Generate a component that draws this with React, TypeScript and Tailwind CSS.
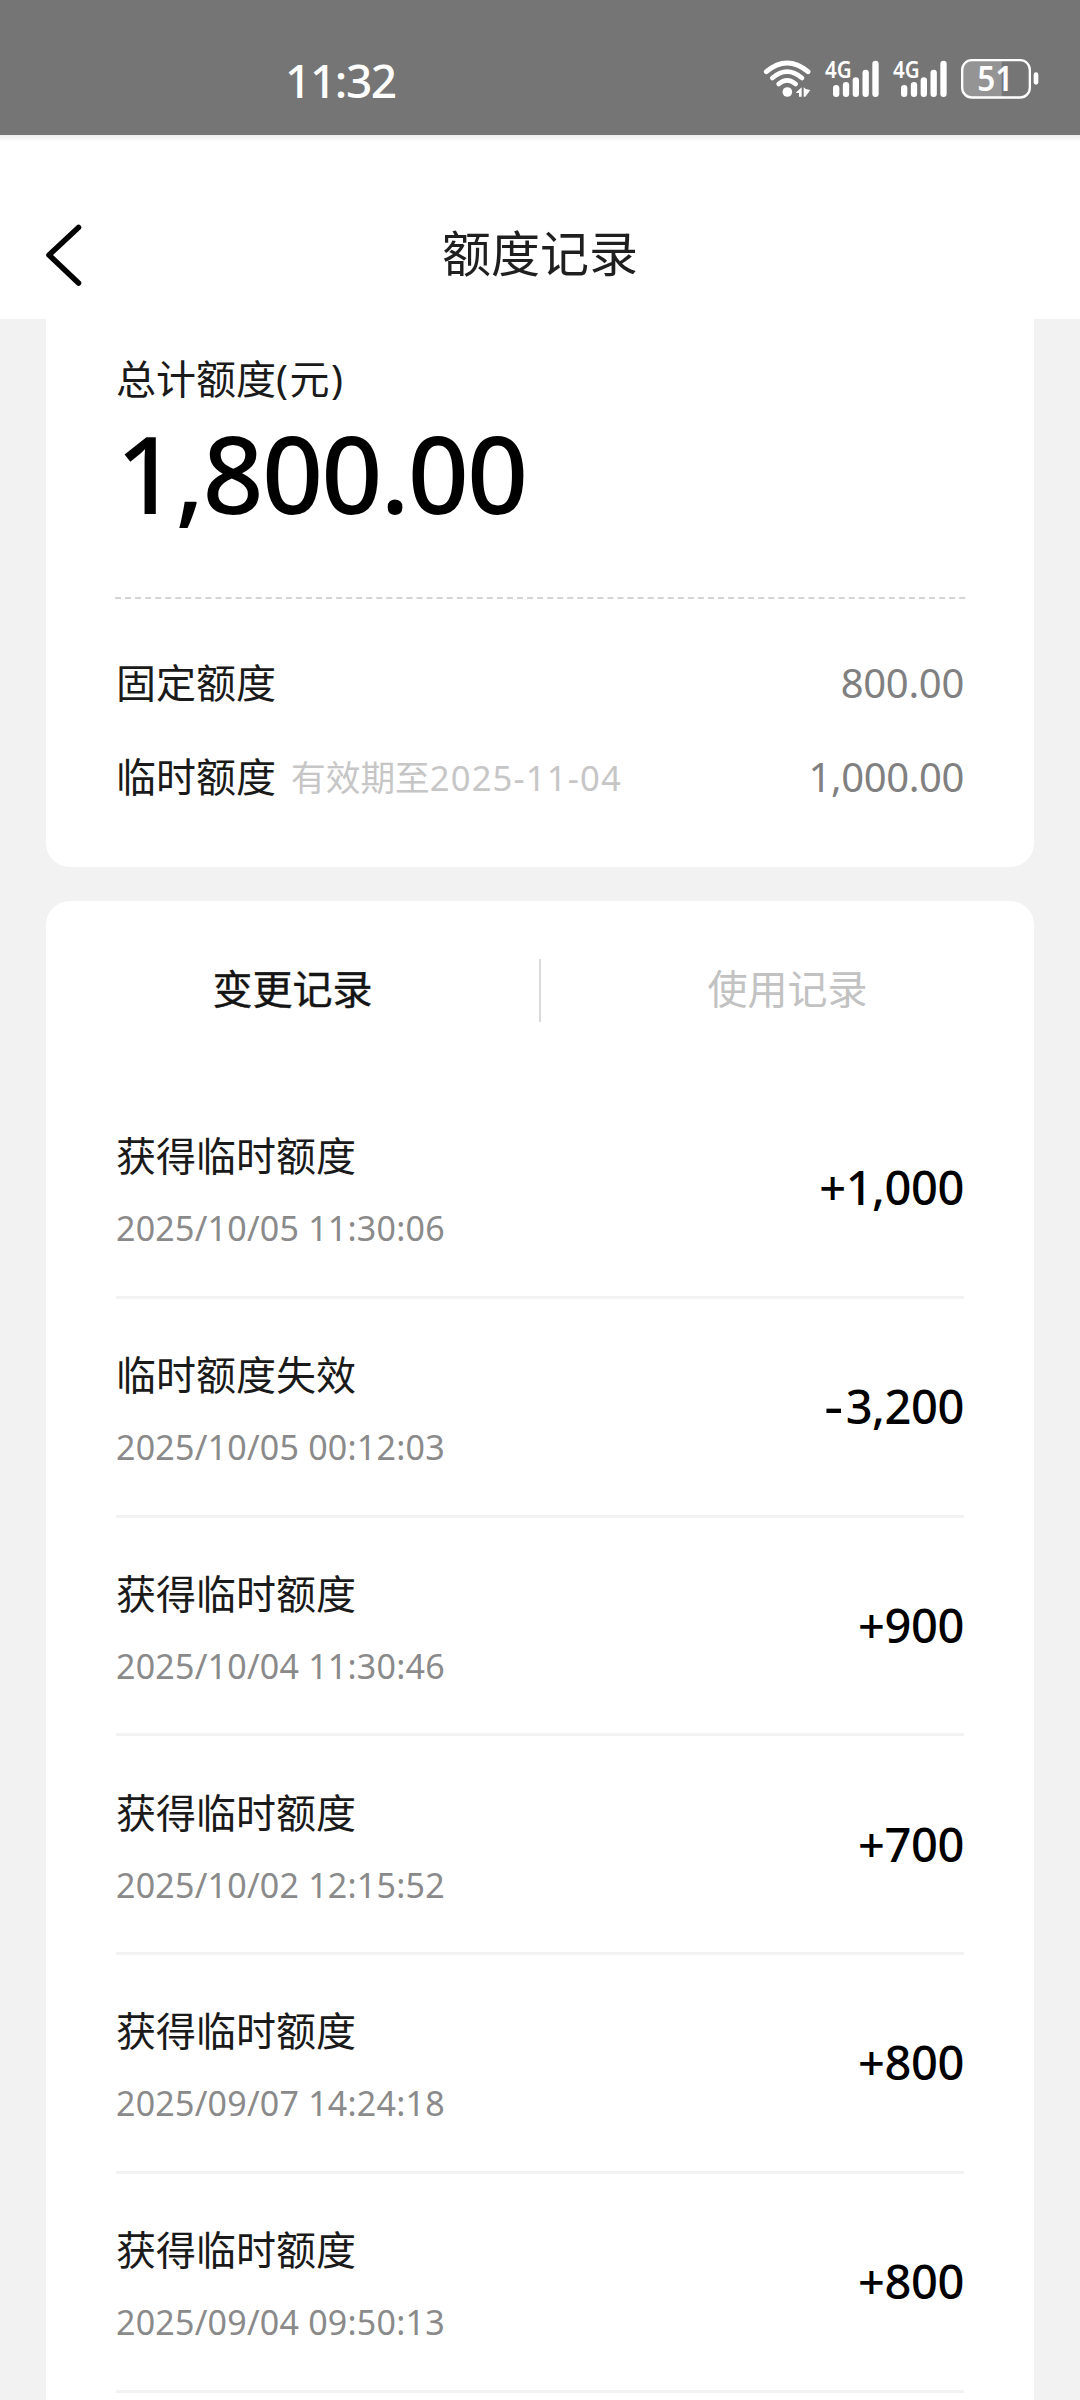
import React, { useState } from 'react';
import { clsx } from 'clsx';

interface QuotaRecord {
    id: number;
    title: string;
    time: string;
    amount: string;
}

const records: QuotaRecord[] = [
    { id: 1, title: '获得临时额度', time: '2025/10/05 11:30:06', amount: '+1,000' },
    { id: 2, title: '临时额度失效', time: '2025/10/05 00:12:03', amount: '-3,200' },
    { id: 3, title: '获得临时额度', time: '2025/10/04 11:30:46', amount: '+900' },
    { id: 4, title: '获得临时额度', time: '2025/10/02 12:15:52', amount: '+700' },
    { id: 5, title: '获得临时额度', time: '2025/09/07 14:24:18', amount: '+800' },
    { id: 6, title: '获得临时额度', time: '2025/09/04 09:50:13', amount: '+800' },
];

const tabs = ['变更记录', '使用记录'];

function WifiIcon() {
    return (
        <svg viewBox="70 55 150 123" className="w-[50px] h-[41px]" fill="none" stroke="#fff" strokeLinecap="round">
            <path d="M80 96 Q142 44 205 96" strokeWidth="15" />
            <path d="M98 115 Q142 77 187 115" strokeWidth="14" />
            <path d="M117 133 Q142 111 168 133" strokeWidth="14" />
            <circle cx="143" cy="157" r="14.5" fill="#fff" stroke="none" />
            {/* Up / down traffic arrows */}
            <path d="M168 159 L186 143 V171 H178 V160 Z" fill="#fff" stroke="none" />
            <path d="M192 143 L198 148 L212 151 L197 171 H192 Z" fill="#fff" stroke="none" />
        </svg>
    );
}

function SignalIcon() {
    const tops = [136, 127, 113, 90, 63];
    return (
        <svg viewBox="252 55 168 123" className="w-[56px] h-[41px] overflow-visible" fill="#fff">
            {tops.map((top, i) => (
                <rect key={top} x={279 + i * 29.5} y={top} width="19" height={172 - top} rx="9.5" />
            ))}
            <text x="255" y="114" fontSize="68" fontWeight="600" textLength="80" lengthAdjust="spacingAndGlyphs">4G</text>
        </svg>
    );
}

function BatteryIcon() {
    return (
        <svg viewBox="660 55 240 126" className="w-[80px] h-[42px] overflow-visible">
            <path d="M785 64 H697 Q669 64 669 91 V145 Q669 172 697 172 H785 Z" fill="#949494" />
            <rect x="666.5" y="61.5" width="203" height="112" rx="29" fill="none" stroke="#fff" strokeWidth="7" />
            <rect x="881" y="98" width="14" height="37" rx="7" fill="#fff" />
            <text x="712" y="153" fontSize="101" fontWeight="600" fill="#fff" textLength="108" lengthAdjust="spacingAndGlyphs">51</text>
        </svg>
    );
}

function StatusBar() {
    return (
        <div className="flex h-[135px] items-start justify-between bg-[#757575] pl-[285px] pr-[40px] pt-[58px] text-white">
            <div className="-mt-[2px] text-[46px] font-medium leading-[48px] tracking-[-1.4px]">11:32</div>
            <div className="flex">
                <WifiIcon />
                <div className="ml-[11px] flex gap-3">
                    <SignalIcon />
                    <SignalIcon />
                </div>
                <div className="ml-[12px]">
                    <BatteryIcon />
                </div>
            </div>
        </div>
    );
}

function NavBar() {
    return (
        <div className="h-[184px] bg-white">
            <div className="h-[7px] bg-gradient-to-b from-[#ededed] to-white" />
            <div className="grid h-[177px] grid-cols-[120px_1fr_120px] pt-[76px]">
                <button className="ml-[44px] h-[72px] w-10" aria-label="返回">
                    <svg viewBox="0 0 40 72" className="h-[72px] w-10" fill="none" stroke="#000" strokeWidth="5.5" strokeLinecap="round" strokeLinejoin="round">
                        <path d="M34.5 9.5 L5 37 L34.5 65" />
                    </svg>
                </button>
                <h1 className="text-center text-[49px] leading-[70px] text-[#1f1f1f]">额度记录</h1>
            </div>
        </div>
    );
}

function SummaryCard() {
    return (
        <section className="h-[548px] rounded-b-3xl bg-white px-[70px] pt-[30px]">
            <div className="text-[40px] leading-[60px]">
                总计额度<span className="tracking-[1.5px]">(元)</span>
            </div>
            <div className="mt-[9px] text-[107px] font-medium leading-[110px] tracking-[-1.9px] text-black">1,800.00</div>
            <svg className="-ml-px mt-[69px] block h-[2px] w-[851px]" aria-hidden="true">
                <line x1="0" y1="1" x2="851" y2="1" stroke="#d4d4d4" strokeWidth="2" strokeDasharray="6 4.05" />
            </svg>
            <div className="mt-[54px] flex items-center justify-between text-[40px] leading-[60px]">
                <span>固定额度</span>
                <span className="tracking-[-0.3px] text-[#808080]">800.00</span>
            </div>
            <div className="mt-[32px] flex items-center justify-between text-[40px] leading-[60px]">
                <div className="flex items-center">
                    <span>临时额度</span>
                    <span className="ml-[15px] mt-[3px] text-[34.7px] text-[#c6c6c6]">
                        有效期至<span className="tracking-[1.1px]">2025-11-04</span>
                    </span>
                </div>
                <span className="tracking-[-0.4px] text-[#808080]">1,000.00</span>
            </div>
        </section>
    );
}

function Amount({ value }: { value: string }) {
    const sign = value[0];
    return (
        <span className="-mt-[1px] text-[47px] font-medium leading-[60px] tracking-[-0.4px] text-black">
            <span className={clsx(sign === '-' && 'mr-[3px] inline-block origin-right scale-x-[1.25]')}>{sign}</span>
            {value.slice(1)}
        </span>
    );
}

function RecordRow({ record }: { record: QuotaRecord }) {
    return (
        <li className="flex h-[218.75px] items-center justify-between border-b-[3px] border-[#f2f2f2]">
            <div className="pt-[9px]">
                <p className="text-[40px] leading-[60px]">{record.title}</p>
                <p className="mt-[12px] text-[34px] leading-[60px] tracking-[0.22px] text-[#8a8a8a]">{record.time}</p>
            </div>
            <Amount value={record.amount} />
        </li>
    );
}

export default function App() {
    const [activeTab, setActiveTab] = useState(0);

    return (
        <div className="h-[2400px] w-[1080px] overflow-hidden bg-[#f2f2f2] font-['Noto_Sans','Noto_Sans_CJK_SC',sans-serif] text-[#1a1a1a]">
            <StatusBar />
            <NavBar />
            <main className="px-[46px]">
                <SummaryCard />
                <section className="mt-[34px] h-[1560px] rounded-t-3xl bg-white">
                    {/* Tabs */}
                    <div className="flex h-[179px] pt-[58px]">
                        {tabs.map((tab, i) => (
                            <button
                                key={tab}
                                onClick={() => setActiveTab(i)}
                                className={clsx(
                                    'h-[63px] flex-1 pb-1 text-[40px] leading-[60px]',
                                    i === 0 && 'border-r-2 border-[#dadada]',
                                    activeTab === i ? 'text-[#141414] [-webkit-text-stroke:0.4px]' : 'text-[#c2c2c2]'
                                )}
                            >
                                {tab}
                            </button>
                        ))}
                    </div>
                    <ul className="px-[70px]">
                        {records.map((record) => (
                            <RecordRow key={record.id} record={record} />
                        ))}
                    </ul>
                </section>
            </main>
        </div>
    );
}
